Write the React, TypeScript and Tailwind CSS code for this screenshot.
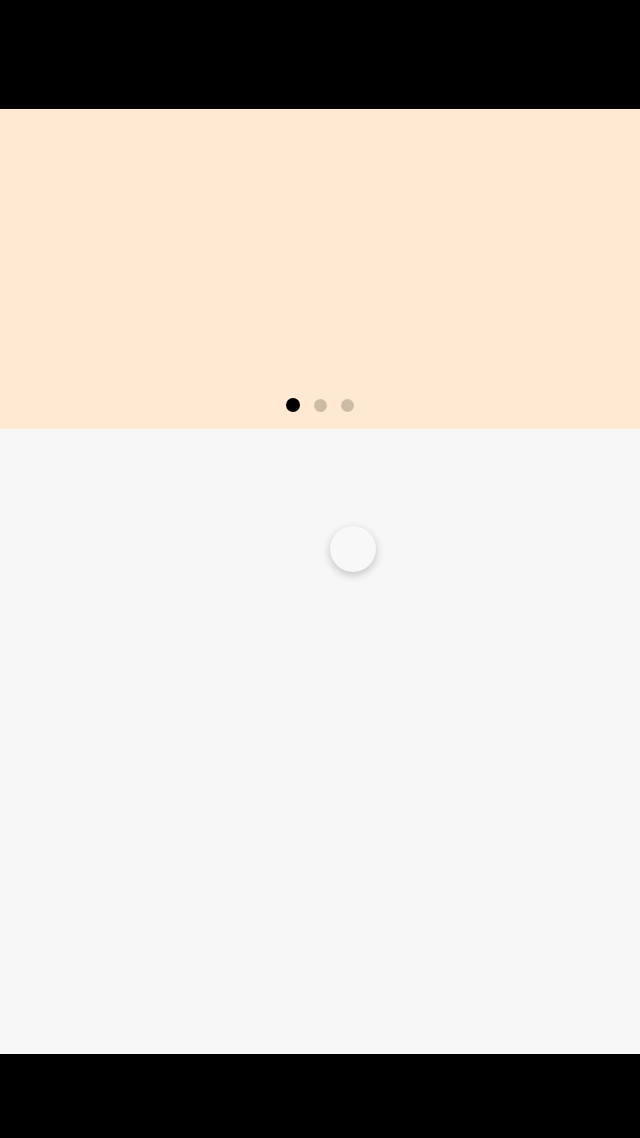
export default function App() {
  return (
    <div className="flex h-[1138px] w-[640px] flex-col bg-black">
      <div className="h-[109px] shrink-0 bg-black" />
      <div className="flex h-[320px] shrink-0 flex-col items-center justify-end bg-[#ffe9d2] pb-[17px]">
        <div className="flex items-center gap-[14px]">
          <span className="h-[14px] w-[14px] rounded-full bg-black" />
          <span className="h-[13px] w-[13px] rounded-full bg-[#cdbba6]" />
          <span className="h-[13px] w-[13px] rounded-full bg-[#cdbba6]" />
        </div>
      </div>
      <div className="flex h-[625px] shrink-0 flex-col bg-[#f7f7f7]">
        <div className="ml-[330px] mt-[97px] h-[46px] w-[46px] rounded-full bg-[#f8f8f8] shadow-[0_3px_8px_rgba(0,0,0,0.22)]" />
      </div>
      <div className="flex-1 bg-black" />
    </div>
  );
}
